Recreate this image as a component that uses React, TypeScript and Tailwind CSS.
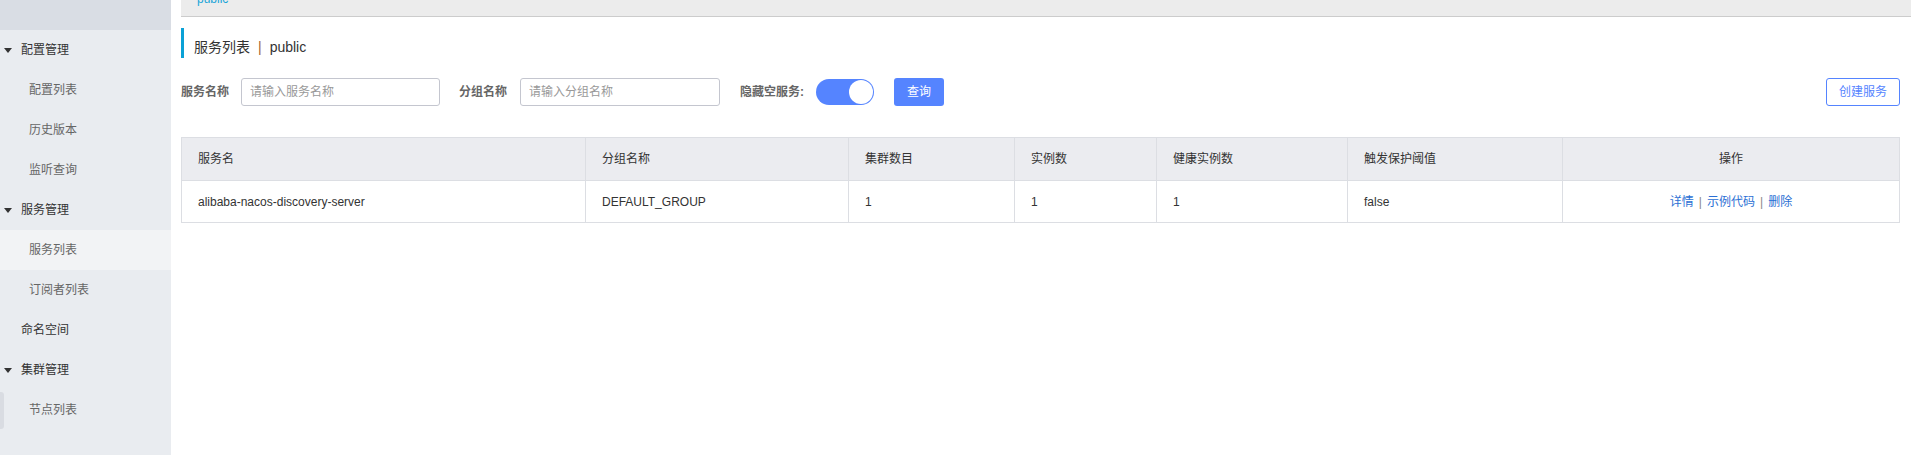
const font = { fontFamily: '"Liberation Sans", "Noto Sans CJK SC", sans-serif' };

const Caret = () => (
  <svg width="8" height="5" viewBox="0 0 8 5" className="mr-[9px] ml-[4px]">
    <path d="M0 0 L8 0 L4 5 Z" fill="#333" />
  </svg>
);

const Group = ({ label }: { label: string }) => (
  <div className="flex h-[40px] items-center text-[12px] text-[#333]">
    <Caret />
    {label}
  </div>
);

const Item = ({ label, active }: { label: string; active?: boolean }) => (
  <div
    className={`flex h-[40px] items-center pl-[29px] text-[12px] text-[#666] ${
      active ? "bg-[#f2f3f5]" : ""
    }`}
  >
    {label}
  </div>
);

const Sidebar = () => (
  <div className="flex h-full w-[171px] shrink-0 flex-col bg-[#e9ecf0]">
    <div className="h-[30px] bg-[#d9dde4]" />
    <Group label="配置管理" />
    <Item label="配置列表" />
    <Item label="历史版本" />
    <Item label="监听查询" />
    <Group label="服务管理" />
    <Item label="服务列表" active />
    <Item label="订阅者列表" />
    <div className="flex h-[40px] items-center pl-[21px] text-[12px] text-[#333]">命名空间</div>
    <Group label="集群管理" />
    <div className="relative">
      <div className="absolute left-0 top-[2px] h-[37px] w-[4px] rounded-r-[3px] bg-[#d9dce2]" />
      <Item label="节点列表" />
    </div>
  </div>
);

const cols = [
  { name: "服务名", w: "w-[404px]" },
  { name: "分组名称", w: "w-[263px]" },
  { name: "集群数目", w: "w-[166px]" },
  { name: "实例数", w: "w-[142px]" },
  { name: "健康实例数", w: "w-[191px]" },
  { name: "触发保护阈值", w: "w-[215px]" },
];

const row = ["alibaba-nacos-discovery-server", "DEFAULT_GROUP", "1", "1", "1", "false"];

const Table = () => (
  <div className="mt-[31px] border border-[#dcdee3] text-[12px] text-[#333]">
    <div className="flex h-[42px] bg-[#ebecf0]">
      {cols.map((c) => (
        <div key={c.name} className={`${c.w} flex items-center border-r border-[#dcdee3] pl-[16px]`}>
          {c.name}
        </div>
      ))}
      <div className="flex flex-1 items-center justify-center">操作</div>
    </div>
    <div className="flex h-[42px] border-t border-[#dcdee3] bg-white">
      {row.map((v, i) => (
        <div key={i} className={`${cols[i].w} flex items-center border-r border-[#dcdee3] pl-[16px]`}>
          {v}
        </div>
      ))}
      <div className="flex flex-1 items-center justify-center text-[#2b6fd4]">
        <span>详情</span>
        <span className="mx-[5px] text-[#888]">|</span>
        <span>示例代码</span>
        <span className="mx-[5px] text-[#888]">|</span>
        <span>删除</span>
      </div>
    </div>
  </div>
);

export default function App() {
  return (
    <div className="flex h-[455px] w-full overflow-hidden bg-white" style={font}>
      <Sidebar />
      <div className="flex flex-1 flex-col pl-[10px]">
        <div className="h-[17px] shrink-0 overflow-hidden border-b border-[#cccccc] bg-[#ececec] pl-[16px] text-[12px] leading-[12px] text-[#1aa5d8]">
          <span className="-mt-[7px] block">public</span>
        </div>
        <div className="pr-[11px]">
          <div className="mt-[11px] flex h-[30px] items-center border-l-[3px] border-[#0aa1d6] pl-[10px] pt-[9px] text-[14px] text-[#333]">
            服务列表
            <span className="mx-[8px] text-[#a0642d]">|</span>
            public
          </div>
          <div className="mt-[20px] flex h-[28px] items-center text-[12px]">
            <span className="font-bold text-[#666]">服务名称</span>
            <input
              className="ml-[12px] h-[28px] w-[199px] rounded-[3px] border border-[#c4c6cf] px-[8px] text-[12px] outline-none placeholder:text-[#999]"
              placeholder="请输入服务名称"
            />
            <span className="ml-[19px] font-bold text-[#666]">分组名称</span>
            <input
              className="ml-[13px] h-[28px] w-[200px] rounded-[3px] border border-[#c4c6cf] px-[8px] text-[12px] outline-none placeholder:text-[#999]"
              placeholder="请输入分组名称"
            />
            <span className="ml-[20px] font-bold text-[#666]">隐藏空服务:</span>
            <div className="ml-[12px] flex h-[26px] w-[58px] items-center justify-end rounded-full bg-[#5584ff] pr-[1px]">
              <div className="h-[24px] w-[24px] rounded-full bg-white" />
            </div>
            <button className="ml-[20px] h-[28px] w-[50px] rounded-[3px] bg-[#5584ff] text-[12px] text-white">
              查询
            </button>
            <button className="ml-auto h-[28px] w-[74px] rounded-[3px] border border-[#5584ff] bg-white text-[12px] text-[#5584ff]">
              创建服务
            </button>
          </div>
          <Table />
        </div>
      </div>
    </div>
  );
}
